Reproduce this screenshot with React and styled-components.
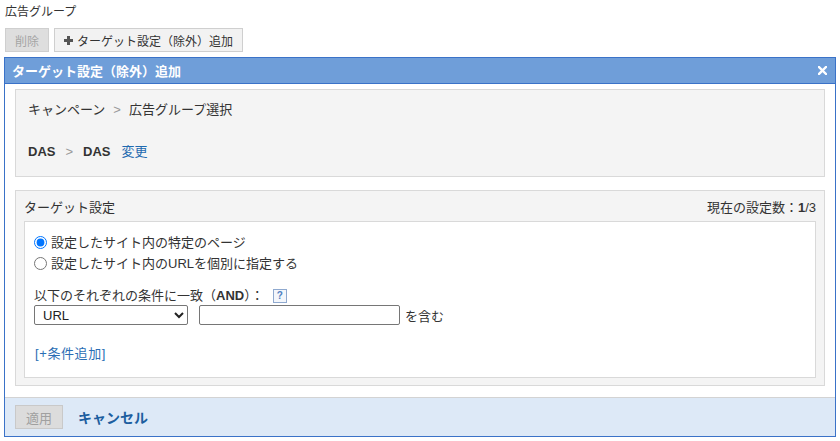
import React from 'react';
import styled, { createGlobalStyle } from 'styled-components';

const GlobalStyle = createGlobalStyle`
    body {
        margin: 0;
        background: #fff;
        color: #333;
        font-family: "Liberation Sans", "Noto Sans CJK JP", sans-serif;
        font-size: 13px;
    }
`;

const Page = styled.div`
    padding: 0 4px;
`;

const Title = styled.div`
    font-size: 12px;
    line-height: 16px;
    padding-top: 4px;
    padding-left: 1px;
`;

// 上部ボタン
const Toolbar = styled.div`
    display: flex;
    gap: 5px;
    margin-top: 8px;
    padding-left: 1px;
`;

const ToolButton = styled.button`
    display: flex;
    align-items: center;
    gap: 4px;
    height: 24px;
    padding: 0 9px;
    font-family: inherit;
    font-size: 12px;
    border: 1px solid #cfcfcf;
    background: ${p => (p.disabled ? '#dedede' : '#f2f2f2')};
    color: ${p => (p.disabled ? '#a5a5a5' : '#333')};
    cursor: pointer;
`;

const Dialog = styled.div`
    margin-top: 5px;
    border: 1px solid #3a72c8;
`;

const DialogHeader = styled.div`
    display: flex;
    align-items: center;
    justify-content: space-between;
    height: 25px;
    padding: 0 6px 0 7px;
    background: #6f9ed9;
    border-bottom: 1px solid #3a72c8;
    color: #fff;
    font-weight: bold;
    font-size: 13px;
`;

const CloseIcon = styled.svg`
    width: 9px;
    height: 9px;
    margin-right: 2px;
`;

const DialogBody = styled.div`
    padding: 5px 10px 11px;
    display: flex;
    flex-direction: column;
    gap: 13px;
`;

const Panel = styled.div`
    background: #f4f4f4;
    border: 1px solid #d9d9d9;
    padding: ${p => p.pad};
`;

const Line = styled.div`
    line-height: 20px;
    margin-top: ${p => p.mt || 0}px;
`;

const Sep = styled.span`
    color: #999;
    margin: 0 ${p => p.m || 8}px;
`;

const Bold = styled.b``;

const Link = styled.a`
    color: #1f6ab0;
    text-decoration: none;
    margin-left: ${p => p.ml || 0}px;
`;

const PanelHead = styled.div`
    display: flex;
    justify-content: space-between;
    line-height: 20px;
    margin-bottom: 3px;
`;

const WhiteBox = styled.div`
    background: #fff;
    border: 1px solid #d9d9d9;
    padding: 10px 9px 14px;
`;

const RadioRow = styled.label`
    display: flex;
    align-items: center;
    gap: 4px;
    line-height: 21px;
    input {
        margin: 0;
        width: 13px;
        height: 13px;
        accent-color: #0075ff;
    }
`;

const CondLabel = styled.div`
    display: flex;
    align-items: center;
    line-height: 18px;
    margin-top: 13px;
`;

const Help = styled.span`
    display: inline-flex;
    align-items: center;
    justify-content: center;
    width: 12px;
    height: 12px;
    margin-left: 9px;
    border: 1px solid #8fa9cf;
    background: #f3f6fb;
    color: #4f7fc2;
    font-size: 10px;
    font-weight: bold;
    line-height: 1;
`;

const CondRow = styled.div`
    display: flex;
    align-items: center;
`;

const Select = styled.select`
    width: 154px;
    height: 20px;
    font-family: inherit;
    font-size: 13px;
    color: #222;
    border: 1px solid #767676;
    border-radius: 2px;
    background: #fff;
    padding: 0 0 0 4px;
`;

const TextInput = styled.input`
    width: 201px;
    height: 20px;
    box-sizing: border-box;
    margin-left: 11px;
    border: 1px solid #767676;
    border-radius: 2px;
`;

const After = styled.span`
    margin-left: 5px;
`;

const AddLink = styled.div`
    margin-top: 20px;
    line-height: 18px;
    padding-left: 1px;
    color: #2a6db4;
    letter-spacing: 0.6px;
`;

const Footer = styled.div`
    display: flex;
    align-items: center;
    gap: 15px;
    height: 38px;
    padding: 0 10px;
    background: #dde9f7;
    border-top: 1px solid #d3d3d3;
`;

const ApplyButton = styled.button`
    width: 48px;
    height: 24px;
    font-family: inherit;
    font-size: 13px;
    background: #dcdcdc;
    border: 1px solid #c9c9c9;
    color: #a0a0a0;
`;

const Cancel = styled.a`
    color: #1c5e9f;
    font-weight: bold;
    font-size: 14px;
    text-decoration: none;
`;

function PlusIcon() {
    return (
        <svg width="9" height="9" viewBox="0 0 9 9">
            <path d="M3 0h3v3h3v3H6v3H3V6H0V3h3z" fill="#555" />
        </svg>
    );
}

export default function App() {
    return (
        <Page>
            <GlobalStyle />
            <Title>広告グループ</Title>
            <Toolbar>
                <ToolButton disabled>削除</ToolButton>
                <ToolButton><PlusIcon />ターゲット設定（除外）追加</ToolButton>
            </Toolbar>
            <Dialog>
                <DialogHeader>
                    <span>ターゲット設定（除外）追加</span>
                    <CloseIcon viewBox="0 0 9 9">
                        <path d="M1 1L8 8M8 1L1 8" stroke="#fff" strokeWidth="2.4" strokeLinecap="square" />
                    </CloseIcon>
                </DialogHeader>
                <DialogBody>
                    <Panel pad="10px 12px 14px">
                        <Line>キャンペーン<Sep>&gt;</Sep>広告グループ選択</Line>
                        <Line mt={22}>
                            <Bold>DAS</Bold><Sep m={10}>&gt;</Sep><Bold>DAS</Bold>
                            <Link ml={11}>変更</Link>
                        </Line>
                    </Panel>
                    <Panel pad="7px 8px 7px">
                        <PanelHead>
                            <span>ターゲット設定</span>
                            <span>現在の設定数：<Bold>1</Bold>/3</span>
                        </PanelHead>
                        <WhiteBox>
                            <RadioRow>
                                <input type="radio" name="t" defaultChecked />
                                設定したサイト内の特定のページ
                            </RadioRow>
                            <RadioRow>
                                <input type="radio" name="t" />
                                設定したサイト内のURLを個別に指定する
                            </RadioRow>
                            <CondLabel>
                                以下のそれぞれの条件に一致（<Bold>AND</Bold>）：<Help>?</Help>
                            </CondLabel>
                            <CondRow>
                                <Select defaultValue="URL">
                                    <option>URL</option>
                                </Select>
                                <TextInput type="text" />
                                <After>を含む</After>
                            </CondRow>
                            <AddLink>[+条件追加]</AddLink>
                        </WhiteBox>
                    </Panel>
                </DialogBody>
                <Footer>
                    <ApplyButton disabled>適用</ApplyButton>
                    <Cancel>キャンセル</Cancel>
                </Footer>
            </Dialog>
        </Page>
    );
}
